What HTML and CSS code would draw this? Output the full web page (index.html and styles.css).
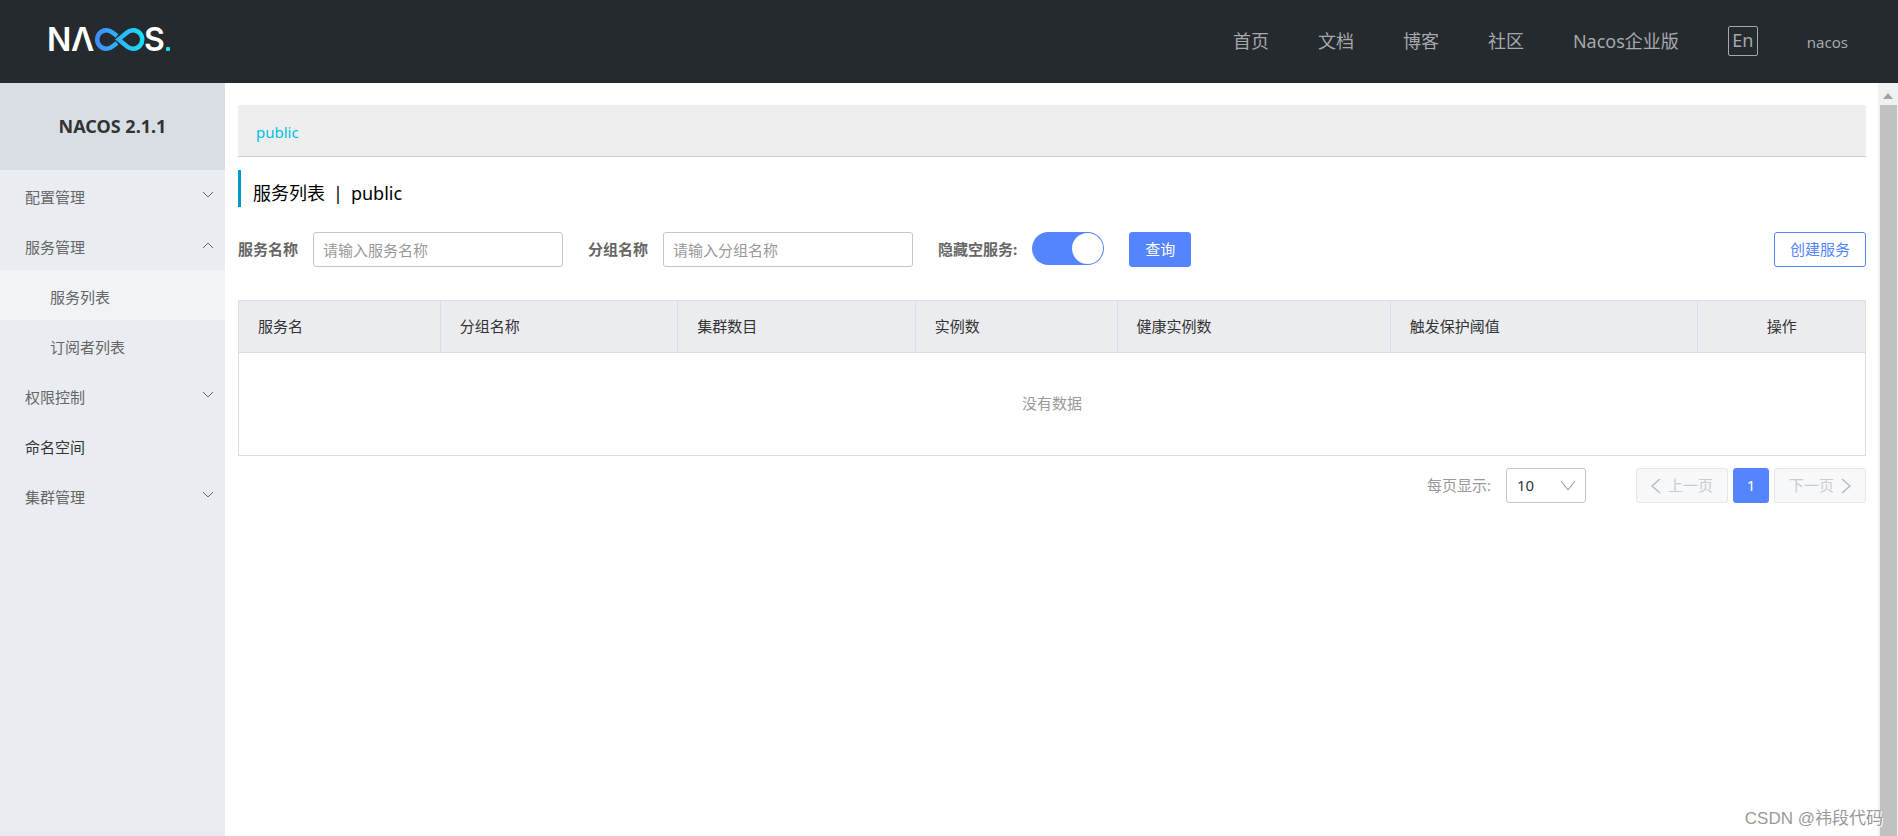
FILE: index.html
```html
<!DOCTYPE html>
<html lang="zh-CN">
<head>
<meta charset="utf-8">
<title>Nacos</title>
<link rel="stylesheet" href="styles.css">
</head>
<body>
<header class="header">
  <a class="logo" href="#" aria-label="Nacos">
    <svg width="125" height="41" viewBox="-3 0 125 41">
      <defs>
        <linearGradient id="loop" gradientUnits="userSpaceOnUse" x1="45" y1="0" x2="95" y2="0">
          <stop offset="0" stop-color="#4488fb"/>
          <stop offset="1" stop-color="#18e0f8"/>
        </linearGradient>
      </defs>
      <text class="logo-text" x="-2" y="30">N</text>
      <text class="logo-text" x="22" y="30">Λ</text>
      <path d="M68 15L63.400 11.400A9.250 9.250 0 1 0 63.400 25.600L68 22" fill="none" stroke="url(#loop)" stroke-width="4.500"/>
      <path d="M69.500 18.500L78.100 11.400A9.250 9.250 0 1 1 78.100 25.600Z" fill="none" stroke="url(#loop)" stroke-width="4.500"/>
      <text class="logo-text" x="95" y="30">S</text>
      <rect x="117" y="26" width="4" height="4" rx="1" fill="#18e0f8"/>
    </svg>
  </a>
  <nav class="nav">
    <a href="#">首页</a>
    <a href="#">文档</a>
    <a href="#">博客</a>
    <a href="#">社区</a>
    <a href="#">Nacos企业版</a>
    <button class="lang" type="button">En</button>
    <a class="user" href="#">nacos</a>
  </nav>
</header>
<div class="layout">
  <aside class="sidebar">
    <h1 class="version">NACOS 2.1.1</h1>
    <nav class="menu">
      <a class="menu-item" href="#">配置管理<svg class="chev" viewBox="0 0 12 8"><path d="M1 1l5 5 5-5"/></svg></a>
      <a class="menu-item" href="#">服务管理<svg class="chev" viewBox="0 0 12 8"><path d="M1 7l5-5 5 5"/></svg></a>
      <a class="menu-item sub active" href="#">服务列表</a>
      <a class="menu-item sub" href="#">订阅者列表</a>
      <a class="menu-item" href="#">权限控制<svg class="chev" viewBox="0 0 12 8"><path d="M1 1l5 5 5-5"/></svg></a>
      <a class="menu-item strong" href="#">命名空间</a>
      <a class="menu-item" href="#">集群管理<svg class="chev" viewBox="0 0 12 8"><path d="M1 1l5 5 5-5"/></svg></a>
    </nav>
  </aside>
  <main class="main">
    <div class="namespaces"><a href="#">public</a></div>
    <h2 class="title"><span>服务列表</span><span>|</span><span>public</span></h2>
    <form class="filters">
      <label class="label" for="service">服务名称</label>
      <input class="text" id="service" type="text" placeholder="请输入服务名称">
      <label class="label next" for="group">分组名称</label>
      <input class="text" id="group" type="text" placeholder="请输入分组名称">
      <label class="label next" for="hide">隐藏空服务:</label>
      <input class="switch" id="hide" type="checkbox" role="switch" checked>
      <button class="btn primary" type="button">查询</button>
      <button class="btn create" type="button">创建服务</button>
    </form>
    <table class="table">
      <colgroup><col class="c1"><col class="c2"><col class="c2"><col class="c1"><col class="c3"><col class="c4"><col></colgroup>
      <thead>
        <tr><th>服务名</th><th>分组名称</th><th>集群数目</th><th>实例数</th><th>健康实例数</th><th>触发保护阈值</th><th class="center">操作</th></tr>
      </thead>
      <tbody>
        <tr><td class="empty" colspan="7">没有数据</td></tr>
      </tbody>
    </table>
    <div class="pager">
      <label class="size-label" for="size">每页显示:</label>
      <div class="size">
        <select id="size"><option>10</option></select>
        <svg viewBox="0 0 16 12"><path d="M1 1l7 9 7-9"/></svg>
      </div>
      <button class="page" type="button" disabled><svg viewBox="0 0 10 16"><path d="M9 2L1 9l8 7"/></svg>上一页</button>
      <button class="page current" type="button">1</button>
      <button class="page" type="button" disabled>下一页<svg viewBox="0 0 10 16"><path d="M1 2l8 7-8 7"/></svg></button>
    </div>
  </main>
  <div class="scroll">
    <svg class="scroll-up" viewBox="0 0 10 6"><path d="M5 0l5 6H0z"/></svg>
    <div class="thumb"></div>
  </div>
</div>
<div class="watermark">CSDN @祎段代码</div>
</body>
</html>
```
FILE: styles.css
```css
* { box-sizing: border-box; }
body {
  margin: 0;
  min-height: 100vh;
  display: flex;
  flex-direction: column;
  position: relative;
  background: #fff;
  color: #333;
  font: 15px/20px "Noto Sans", "Noto Sans CJK SC", sans-serif;
}
a { color: inherit; text-decoration: none; }
button, input, select { font: inherit; margin: 0; }

.header {
  display: flex;
  align-items: center;
  justify-content: space-between;
  height: 83px;
  padding: 0 50px 0 46px;
  background: #252a2f;
}
.logo { display: flex; }
.logo svg { overflow: visible; }
.logo-text { font: 600 32px Inter, sans-serif; fill: #fff; }
.nav {
  display: flex;
  align-items: center;
  gap: 49px;
  padding-bottom: 2px;
  color: #a6a8aa;
  font-size: 18px;
  line-height: 26px;
}
.lang {
  width: 30px;
  height: 30px;
  padding: 0 0 2px;
  border: 1px solid #a6a8aa;
  border-radius: 2px;
  background: none;
  color: inherit;
  line-height: 26px;
}
.user { padding-top: 2px; font-size: 15px; }

.layout { flex: 1; display: flex; }
.sidebar { width: 225px; background: #e9edf2; }
.version {
  margin: 0;
  height: 87px;
  background: #d9dee4;
  text-align: center;
  font-size: 18px;
  font-weight: 700;
  line-height: 87px;
}
.menu-item {
  display: flex;
  align-items: center;
  justify-content: space-between;
  height: 50px;
  padding: 4px 11px 0 25px;
  color: #666;
}
.sub { padding-left: 50px; }
.active { background: #f1f3f7; }
.strong { color: #333; }
.chev {
  width: 12px;
  height: 8px;
  margin-bottom: 4px;
  fill: none;
  stroke: #666;
}

.main { flex: 1; padding: 22px 12px 0 13px; }
.namespaces {
  height: 52px;
  padding: 3px 18px 0;
  background: #eee;
  border-bottom: 1px solid #ccc;
  color: #00c1de;
  line-height: 48px;
}
.title {
  display: flex;
  gap: 8px;
  height: 37px;
  margin: 13px 0 25px;
  padding: 5px 0 0 12px;
  border-left: 3px solid #09c;
  color: #000;
  font-size: 18px;
  font-weight: 400;
  line-height: 36px;
}
.filters { display: flex; align-items: flex-start; }
.label { margin-right: 15px; color: #666; font-weight: 700; line-height: 35px; }
.next { margin-left: 25px; }
.text {
  width: 250px;
  height: 35px;
  padding: 0 9px;
  border: 1px solid #c4c6cf;
  border-radius: 3px;
  color: #333;
}
.text::placeholder { color: #999; }
.switch {
  appearance: none;
  width: 72px;
  height: 33px;
  margin-right: 25px;
  padding: 1px;
  border-radius: 17px;
  background: #5584ff;
}
.switch::before {
  content: "";
  display: block;
  width: 31px;
  height: 31px;
  margin-left: auto;
  border-radius: 50%;
  background: #fff;
}
.btn { height: 35px; padding: 0 15px 2px; border: 1px solid #5584ff; border-radius: 3px; }
.primary { background: #5584ff; color: #fff; }
.create { margin-left: auto; background: #fff; color: #5584ff; }

.table {
  width: 100%;
  margin: 33px 0 12px;
  border-collapse: collapse;
  table-layout: fixed;
}
.c1 { width: 12.4%; }
.c2 { width: 14.6%; }
.c3 { width: 16.8%; }
.c4 { width: 18.9%; }
.table th {
  height: 52px;
  padding: 0 19px 2px;
  border: 1px solid #dcdee3;
  background: #ebecf0;
  text-align: left;
  font-weight: 400;
}
.table .center { text-align: center; }
.table .empty { height: 103px; padding: 0 0 2px; border: 1px solid #dcdee3; color: #999; text-align: center; }

.pager { display: flex; align-items: center; justify-content: flex-end; }
.size-label { margin-right: 15px; padding-bottom: 2px; color: #999; }
.size { position: relative; width: 80px; margin-right: 50px; }
.size select {
  appearance: none;
  display: block;
  width: 100%;
  height: 35px;
  padding: 0 10px 2px;
  border: 1px solid #c4c6cf;
  border-radius: 3px;
  background: #fff;
  color: #333;
}
.size svg {
  position: absolute;
  top: 12px;
  right: 10px;
  width: 16px;
  height: 12px;
  fill: none;
  stroke: #888;
  pointer-events: none;
}
.page {
  display: flex;
  align-items: center;
  justify-content: center;
  gap: 7px;
  width: 92px;
  height: 35px;
  padding: 0 0 2px;
  border: 1px solid #e6e7eb;
  border-radius: 3px;
  background: #f7f8fa;
  color: #ccc;
}
.page svg { width: 10px; height: 16px; overflow: visible; fill: none; stroke: #bbb; stroke-width: 1.5; }
.current { width: 36px; margin: 0 5px; border-color: #5584ff; background: #5584ff; color: #fff; }

.scroll {
  display: flex;
  flex-direction: column;
  align-items: center;
  width: 20px;
  padding-top: 10px;
  background: #f1f1f1;
}
.scroll-up { width: 10px; height: 6px; fill: #a3a3a3; }
.thumb { flex: 1; width: 17px; margin-top: 6px; background: #c1c1c1; }
.watermark {
  position: absolute;
  right: 15px;
  bottom: 5px;
  color: #999;
  font: 17px/24px "Liberation Sans", "Noto Sans CJK SC", sans-serif;
  text-shadow: 1px 1px 0 #fff;
}
```
